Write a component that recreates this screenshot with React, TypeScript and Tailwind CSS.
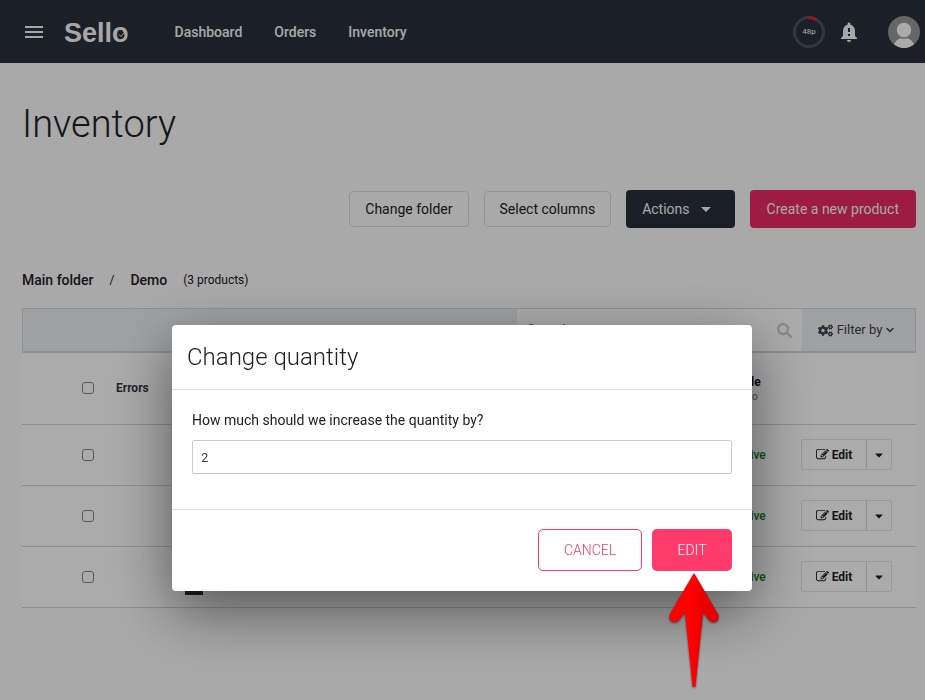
import { useState } from "react";
import { FaCaretDown, FaCogs, FaSearch } from "react-icons/fa";
import { MdArrowDropDown, MdMenu, MdNotificationImportant } from "react-icons/md";
import { ChevronDown } from "lucide-react";

const navLinks = ["Dashboard", "Orders", "Inventory"];

const products = [
  { id: 1, name: "Product one", quantity: 4, status: "Active" },
  { id: 2, name: "Product two", quantity: 8, status: "Active" },
  { id: 3, name: "Product three", quantity: 6, status: "Active" },
];

const EditIcon = () => (
  <svg viewBox="0 0 1792 1792" className="size-[13px]" fill="currentColor" aria-hidden="true">
    <path d="M888 1184l116-116-152-152-116 116v56h96v96h56zm440-720q-16-16-33 1l-350 350q-17 17-1 33t33-1l350-350q17-17 1-33zm80 594v190q0 119-84.5 203.5t-203.5 84.5h-832q-119 0-203.5-84.5t-84.5-203.5v-832q0-119 84.5-203.5t203.5-84.5h832q63 0 117 25 15 7 18 23 3 17-9 29l-49 49q-14 14-32 8-23-6-45-6h-832q-66 0-113 47t-47 113v832q0 66 47 113t113 47h832q66 0 113-47t47-113v-126q0-13 9-22l64-64q15-15 35-7t20 29zm-96-738l288 288-672 672h-288v-288zm444 132l-92 92-288-288 92-92q28-28 68-28t68 28l152 152q28 28 28 68t-28 68z" />
  </svg>
);

const Logo = () => (
  <a href="#home" className="relative ml-[18px] pt-[3px] font-['Liberation_Sans',sans-serif] text-[27px] leading-8 font-bold">
    Sello
    <svg viewBox="0 0 12 12" className="absolute right-[2px] bottom-2 size-3" aria-hidden="true">
      <circle cx="6" cy="6" r="3.5" fill="#282f3c" />
      <path d="M4 5.500l2 2 3-3.500" fill="none" stroke="#fafafa" strokeWidth="1" />
    </svg>
  </a>
);

const Points = () => (
  <div className="relative flex size-8 items-center justify-center text-[8px]">
    <svg viewBox="0 0 32 32" className="absolute inset-0" fill="none" strokeWidth="3" aria-hidden="true">
      <circle cx="16" cy="16" r="14.5" stroke="#4b5060" />
      <path d="M15 1.5A14.5 14.5 0 0 1 23 3.5" stroke="#ef1c24" />
    </svg>
    48p
  </div>
);

const Avatar = () => (
  <svg viewBox="0 0 32 32" className="size-8" aria-hidden="true">
    <clipPath id="avatar">
      <circle cx="16" cy="16" r="16" />
    </clipPath>
    <g clipPath="url(#avatar)">
      <rect width="32" height="32" fill="#999" />
      <ellipse cx="16" cy="32" rx="10.5" ry="10.5" fill="#fff" />
      <circle cx="16" cy="14" r="8" fill="#fff" stroke="#999" strokeWidth="1.5" />
    </g>
  </svg>
);

const Header = () => (
  <header className="flex h-[63px] items-center bg-[#282f3c] pl-[22px] pr-[5px] text-[#fafafa]">
    <button aria-label="Menu">
      <MdMenu className="size-6" />
    </button>
    <Logo />
    <nav className="ml-[46px] flex flex-1 gap-8 text-sm font-medium">
      {navLinks.map((link) => (
        <a key={link} href={`#${link.toLowerCase()}`}>
          {link}
        </a>
      ))}
    </nav>
    <Points />
    <button aria-label="Notifications" className="ml-3">
      <MdNotificationImportant className="size-6" />
    </button>
    <button aria-label="Account" className="ml-[27px]">
      <Avatar />
    </button>
  </header>
);

const ProductTable = () => (
  <section className="mt-[18px]">
    {/* TOOLBAR */}
    <div className="flex h-[45px] justify-end border border-b-2 border-[#d4d7dc] bg-[#edf0f4] text-[#3d4250]">
      <label className="flex w-[285px] items-center bg-white px-[10px]">
        <input
          type="search"
          aria-label="Search"
          placeholder="Search..."
          className="min-w-0 flex-1 text-sm outline-none placeholder:text-[#666]"
        />
        <FaSearch className="size-[15px] text-[#ccc]" />
      </label>
      <button className="flex w-[113px] items-center justify-center gap-1 pr-[3px] text-[13px]">
        <FaCogs className="size-[15px]" />
        Filter by
        <ChevronDown className="-ml-[2px] size-3" strokeWidth={3} />
      </button>
    </div>

    {/* PRODUCTS */}
    <table className="w-full table-fixed bg-white text-left text-xs">
      <thead>
        <tr className="h-[71px] border-b border-[#d4d4d4]">
          <th className="w-[94px] pl-[60px]">
            <input type="checkbox" aria-label="Select all" className="block size-3 appearance-none rounded-[3px] border border-[#888]" />
          </th>
          <th className="w-[69px] font-bold text-[#333748]">Errors</th>
          <th className="w-[60px]">Image</th>
          <th>Title</th>
          <th className="w-[80px]">Quantity</th>
          <th className="w-[104px] text-center text-[#111]">
            Sale
            <span className="block text-[10px] font-normal text-[#777]">Info</span>
          </th>
          <th className="w-[115px]" aria-label="Actions" />
        </tr>
      </thead>
      <tbody>
        {products.map((product) => (
          <tr key={product.id} className="h-[61px] border-b border-[#d4d4d4]">
            <td className="pl-[60px]">
              <input
                type="checkbox"
                aria-label={`Select ${product.name}`}
                className="block size-3 appearance-none rounded-[3px] border border-[#888]"
              />
            </td>
            <td />
            <td>
              <div className="h-9 w-[18px] bg-[#2c2c3c]" />
            </td>
            <td>{product.name}</td>
            <td>{product.quantity}</td>
            <td className="text-center font-medium text-[#118011]">{product.status}</td>
            <td>
              <div className="inline-flex h-[31px] rounded-[2px] border border-[#e4e4e4] align-middle">
                <button className="flex w-16 items-center justify-center gap-[3px] font-bold">
                  <EditIcon />
                  Edit
                </button>
                <button
                  aria-label={`More actions for ${product.name}`}
                  className="flex w-[25px] items-center justify-center border-l border-[#d8d8d8]"
                >
                  <FaCaretDown className="size-3" />
                </button>
              </div>
            </td>
          </tr>
        ))}
      </tbody>
    </table>
  </section>
);

const Arrow = () => (
  <svg
    viewBox="0 0 52 116"
    className="pointer-events-none absolute top-full left-[16px] mt-[2px] h-[116px] w-[52px] drop-shadow-[0_1px_1px_rgba(0,0,0,0.6)]"
    aria-hidden="true"
  >
    <defs>
      <linearGradient id="arrow">
        <stop offset="0.45" stopColor="#ff0000" />
        <stop offset="0.7" stopColor="#e80000" />
      </linearGradient>
    </defs>
    <path
      d="M26 0L50 41Q52 46 48 48.500Q44 50 41 47L35 39L27.500 113Q26 115 24.500 113L17 39L11 47Q8 50 4 48.500Q0 46 2 41Z"
      fill="url(#arrow)"
    />
  </svg>
);

const QuantityDialog = () => {
  const [quantity, setQuantity] = useState("2");

  return (
    <div className="fixed inset-0 flex items-start justify-center bg-black/33 pt-[325px] pr-[17px] pl-4">
      <form
        role="dialog"
        aria-labelledby="dialog-title"
        className="w-full max-w-[580px] rounded bg-white shadow-[0_20px_60px_rgba(0,0,0,0.5)]"
        onSubmit={(e) => e.preventDefault()}
      >
        <h2 id="dialog-title" className="border-b border-[#e0e0e0] px-[15px] py-4 text-2xl font-light">
          Change quantity
        </h2>

        <div className="border-b border-[#e0e0e0] px-5 pt-5 pb-[35px]">
          <label htmlFor="quantity" className="block text-sm">
            How much should we increase the quantity by?
          </label>
          <input
            id="quantity"
            type="text"
            value={quantity}
            onChange={(e) => setQuantity(e.target.value)}
            className="mt-[10px] block h-[34px] w-full rounded-[2px] border border-[#ccc] px-2 text-[13px] text-[#444] outline-none"
          />
        </div>

        <div className="flex justify-end gap-[10px] px-5 pt-[19px] pb-5 text-sm font-light">
          <button type="button" className="h-[42px] w-[104px] rounded-[5px] border border-[#ff3b6b] text-[#ff3b6b]">
            CANCEL
          </button>
          <div className="relative">
            <button type="submit" className="h-[42px] w-20 rounded-[5px] bg-[#ff3b6b] text-white">
              EDIT
            </button>
            <Arrow />
          </div>
        </div>
      </form>
    </div>
  );
};

const App = () => {
  return (
    <div className="min-h-screen bg-[#fcfcfc] font-[Roboto,sans-serif] text-[#222]">
      <Header />

      <main className="pr-[9px] pl-[22px]">
        <h1 className="pt-9 text-[38px] leading-[50px] font-light">Inventory</h1>

        {/* BUTTONS */}
        <div className="mt-[41px] flex items-center justify-end gap-[15px] text-sm">
          <button className="h-9 rounded border border-[#ddd] px-[15px]">Change folder</button>
          <button className="h-9 rounded border border-[#ddd] px-[15px]">Select columns</button>
          <button className="flex h-[38px] items-center rounded bg-[#282f3c] pr-[17px] pl-4 text-[#fafafa]">
            Actions
            <MdArrowDropDown className="ml-1 size-6" />
          </button>
          <button className="h-[38px] rounded bg-[#e92a64] px-[17px] text-[#fafafa]">Create a new product</button>
        </div>

        {/* BREADCRUMB */}
        <nav className="mt-[42px] flex items-center gap-4 text-xs" aria-label="Breadcrumb">
          <a href="#main" className="text-sm font-medium">
            Main folder
          </a>
          <span>/</span>
          <a href="#demo" className="text-sm font-medium">
            Demo
          </a>
          <span>(3 products)</span>
        </nav>

        <ProductTable />
      </main>

      <QuantityDialog />
    </div>
  );
};

export default App;
